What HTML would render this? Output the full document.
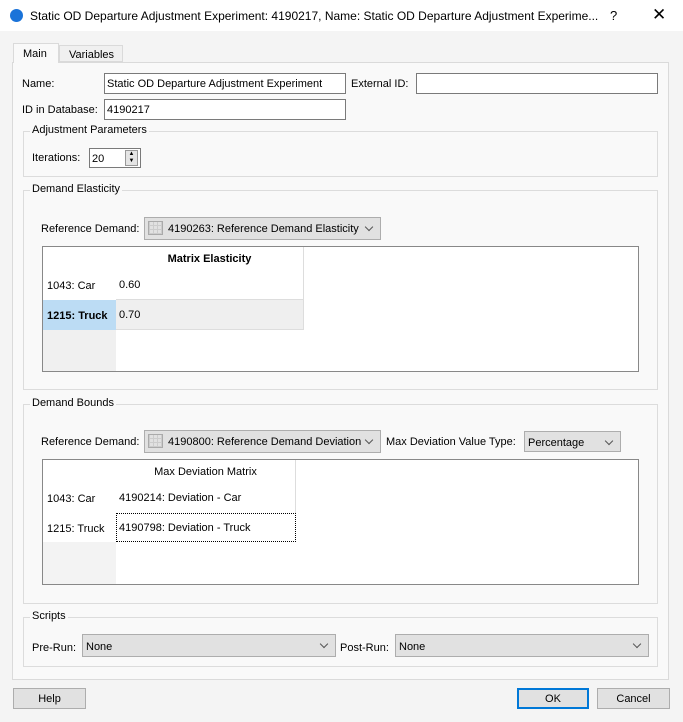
<!DOCTYPE html>
<html><head><style>
*{box-sizing:border-box;margin:0;padding:0}
body{width:683px;height:722px;background:#f4f4f4;font-family:"Liberation Sans",sans-serif;font-size:11px;color:#000;position:relative;overflow:hidden}
.a{position:absolute;white-space:nowrap}
.in{position:absolute;background:#fff;border:1px solid #7a7a7a;padding:4px 0 0 2px;height:21px}
.grp{position:absolute;border:1px solid #dcdcdc}
.gt{position:absolute;background:#f9f9f9;padding:0 2px;top:-8px;left:6px}
.cb{position:absolute;background:#e1e1e1;border:1px solid #adadad;padding:5px 0 0 3px;height:23px}
.cb:after{content:"";position:absolute;right:8px;top:6px;width:5px;height:5px;border-right:1px solid #555;border-bottom:1px solid #555;transform:rotate(45deg)}
.btn{position:absolute;background:#e1e1e1;border:1px solid #adadad;text-align:center;padding-top:4px;height:21px}
.mi{display:inline-block;width:15px;height:14px;border:1px solid #aaa;vertical-align:-3px;margin-right:5px;margin-top:-2px;background:repeating-linear-gradient(90deg,#ccc 0 1px,transparent 1px 4px),repeating-linear-gradient(0deg,#ccc 0 1px,transparent 1px 4px)}
</style></head><body>
<div class="a" style="left:0;top:0;width:683px;height:31px;background:#fff"></div>
<div class="a" style="left:10px;top:9px;width:13px;height:13px;border-radius:50%;background:#1a73d9"></div>
<div class="a" style="left:30px;top:9px;font-size:12px">Static OD Departure Adjustment Experiment: 4190217, Name: Static OD Departure Adjustment Experime...</div>
<div class="a" style="left:610px;top:8px;font-size:13px">?</div>
<div class="a" style="left:652px;top:5px;font-size:17px">✕</div>
<div class="a" style="left:12px;top:62px;width:657px;height:618px;background:#f9f9f9;border:1px solid #dadada"></div>
<div class="a" style="left:13px;top:43px;width:46px;height:20px;background:#f9f9f9;border:1px solid #dadada;border-bottom:none;padding:4px 0 0 9px">Main</div>
<div class="a" style="left:59px;top:45px;width:64px;height:17px;background:#f0f0f0;border:1px solid #dadada;padding:3px 0 0 9px">Variables</div>
<div class="a" style="left:22px;top:78px">Name:</div>
<div class="in" style="left:104px;top:73px;width:242px">Static OD Departure Adjustment Experiment</div>
<div class="a" style="left:351px;top:78px">External ID:</div>
<div class="in" style="left:416px;top:73px;width:242px"></div>
<div class="a" style="left:22px;top:104px">ID in Database:</div>
<div class="in" style="left:104px;top:99px;width:242px">4190217</div>
<div class="grp" style="left:23px;top:131px;width:635px;height:46px"><div class="gt">Adjustment Parameters</div></div>
<div class="a" style="left:32px;top:152px">Iterations:</div>
<div class="in" style="left:89px;top:148px;width:52px;height:20px;padding-top:4px">20</div>
<div class="a" style="left:125px;top:150px;width:13px;height:16px;background:#e5e5e5;border:1px solid #999;font-size:6px;line-height:7px;text-align:center">▲<br>▼</div>
<div class="grp" style="left:23px;top:190px;width:635px;height:200px"><div class="gt">Demand Elasticity</div></div>
<div class="a" style="left:41px;top:223px">Reference Demand:</div>
<div class="cb" style="left:144px;top:217px;width:237px"><span class="mi"></span>4190263: Reference Demand Elasticity</div>
<div class="a" style="left:42px;top:246px;width:597px;height:126px;background:#fff;border:1px solid #888"></div>
<div class="a" style="left:43px;top:330px;width:73px;height:41px;background:#f0f0f0"></div>
<div class="a" style="left:116px;top:247px;width:188px;height:23px;border-right:1px solid #ddd;font-weight:bold;text-align:center;padding-top:6px">Matrix Elasticity</div>
<div class="a" style="left:47px;top:280px">1043: Car</div>
<div class="a" style="left:116px;top:270px;width:188px;height:30px;border-right:1px solid #ddd;border-bottom:1px solid #ddd;padding:9px 3px">0.60</div>
<div class="a" style="left:43px;top:300px;width:73px;height:30px;background:#bcdcf4;font-weight:bold;padding:10px 4px">1215: Truck</div>
<div class="a" style="left:116px;top:300px;width:188px;height:30px;background:#efefef;border-right:1px solid #ddd;border-bottom:1px solid #ddd;padding:9px 3px">0.70</div>
<div class="grp" style="left:23px;top:404px;width:635px;height:200px"><div class="gt">Demand Bounds</div></div>
<div class="a" style="left:41px;top:436px">Reference Demand:</div>
<div class="cb" style="left:144px;top:430px;width:237px"><span class="mi"></span>4190800: Reference Demand Deviation</div>
<div class="a" style="left:386px;top:436px">Max Deviation Value Type:</div>
<div class="cb" style="left:524px;top:431px;width:97px;height:21px;padding-top:5px">Percentage</div>
<div class="a" style="left:42px;top:459px;width:597px;height:126px;background:#fff;border:1px solid #888"></div>
<div class="a" style="left:43px;top:542px;width:73px;height:42px;background:#f3f3f3"></div>
<div class="a" style="left:116px;top:460px;width:180px;height:25px;border-right:1px solid #ddd;text-align:center;padding-top:6px">Max Deviation Matrix</div>
<div class="a" style="left:47px;top:493px">1043: Car</div>
<div class="a" style="left:116px;top:485px;width:180px;height:28px;border-right:1px solid #ddd;padding:7px 3px">4190214: Deviation - Car</div>
<div class="a" style="left:47px;top:523px">1215: Truck</div>
<div class="a" style="left:116px;top:513px;width:180px;height:29px;border:1px dotted #000;padding:8px 2px">4190798: Deviation - Truck</div>
<div class="grp" style="left:23px;top:617px;width:635px;height:50px"><div class="gt">Scripts</div></div>
<div class="a" style="left:32px;top:642px">Pre-Run:</div>
<div class="cb" style="left:82px;top:634px;width:254px;padding-top:6px">None</div>
<div class="a" style="left:340px;top:642px">Post-Run:</div>
<div class="cb" style="left:395px;top:634px;width:254px;padding-top:6px">None</div>
<div class="btn" style="left:13px;top:688px;width:73px">Help</div>
<div class="btn" style="left:517px;top:688px;width:72px;border:2px solid #0078d7;padding-top:3px">OK</div>
<div class="btn" style="left:597px;top:688px;width:73px">Cancel</div>
</body></html>
